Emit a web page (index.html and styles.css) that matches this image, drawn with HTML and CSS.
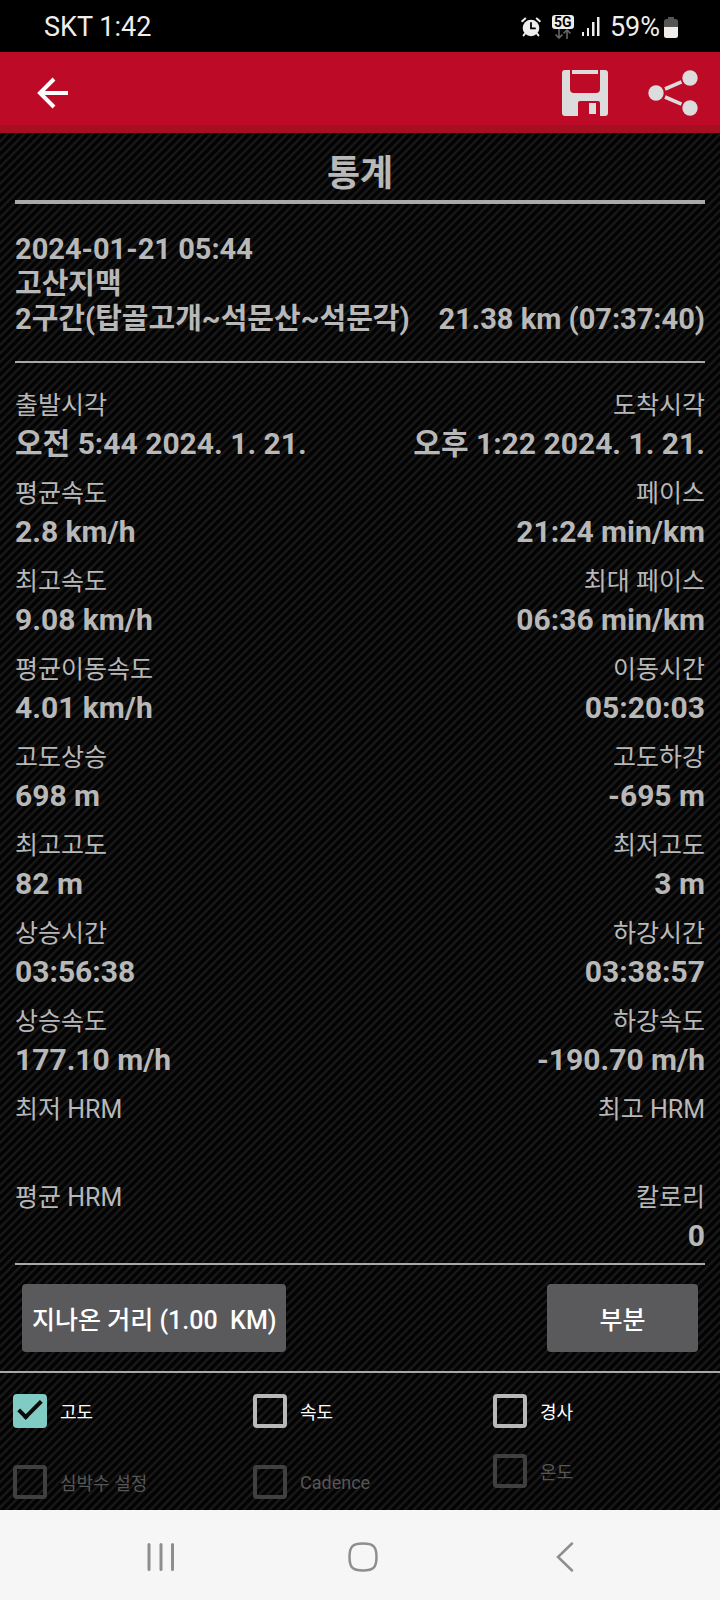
FILE: index.html
```html
<!DOCTYPE html>
<html lang="ko">
<head>
    <meta charset="UTF-8">
    <meta name="viewport" content="width=device-width, initial-scale=1.0">
    <title>통계</title>
    <link rel="stylesheet" href="styles.css">
</head>
<body>
    <div class="status-bar">
        <span>SKT 1:42</span>
        <div class="status-icons">
            <svg width="20" height="20" viewBox="0 0 20 20" fill="none" stroke="#eee" stroke-linecap="round">
                <circle cx="10" cy="11" r="8.3" fill="#eee" stroke="none"></circle>
                <path d="M1.2 4.2 4.2 1.5M18.8 4.2 15.8 1.5" stroke-width="2"></path>
                <path d="M4 16.5 2.6 18.4M16 16.5 17.4 18.4" stroke-width="2"></path>
                <path d="M10 6v5.4h4" stroke="#000" stroke-width="1.8"></path>
            </svg>
            <div class="network">
                <span class="network-type">5G</span>
                <svg width="18" height="10" viewBox="0 0 18 10" fill="none" stroke="#666" stroke-width="1.6">
                    <path d="M5 0v9M1.5 5.5 5 9l3.5-3.5M13 10V1M9.5 4.5 13 1l3.5 3.5"></path>
                </svg>
            </div>
            <svg class="signal" width="18" height="20" viewBox="0 0 18 20" fill="#eee">
                <rect x="0" y="15" width="2" height="4"></rect>
                <rect x="5" y="11" width="2" height="8"></rect>
                <rect x="10" y="5" width="2.5" height="14"></rect>
                <rect x="15" y="0" width="2.5" height="19"></rect>
            </svg>
            <span>59%</span>
            <svg class="battery" width="14" height="21" viewBox="0 0 14 21">
                <path d="M4 0h6v2h1.5A2.5 2.5 0 0 1 14 4.5V10H0V4.5A2.5 2.5 0 0 1 2.5 2H4z" fill="#555"></path>
                <path d="M0 10h14v8.5a2.5 2.5 0 0 1-2.5 2.5h-9A2.5 2.5 0 0 1 0 18.5z" fill="#eee"></path>
            </svg>
        </div>
    </div>

    <header class="toolbar">
        <button class="icon-btn" aria-label="뒤로">
            <svg width="32" height="32" viewBox="0 0 32 32" fill="none" stroke="#fff" stroke-width="4">
                <path d="M31 16H4M17 2 3 16l14 14"></path>
            </svg>
        </button>
        <div class="toolbar-actions">
            <button class="icon-btn" aria-label="저장">
                <svg width="46" height="46" viewBox="0 0 46 46" fill="#dcdcdc">
                    <path fill-rule="evenodd" d="M3 0h5v19a4 4 0 0 0 4 4h22a4 4 0 0 0 4-4V0h5a3 3 0 0 1 3 3v40a3 3 0 0 1-3 3h-5V33a2 2 0 0 0-2-2H18a2 2 0 0 0-2 2v13H3a3 3 0 0 1-3-3V3a3 3 0 0 1 3-3z"></path>
                    <rect x="10" y="0" width="26" height="4"></rect>
                    <rect x="27" y="33" width="7" height="11"></rect>
                </svg>
            </button>
            <button class="icon-btn" aria-label="공유">
                <svg width="50" height="46" viewBox="0 0 50 46" fill="#dcdcdc" stroke="#dcdcdc" stroke-width="3.6">
                    <circle cx="8" cy="23" r="7.7" stroke="none"></circle>
                    <circle cx="42" cy="8" r="7.7" stroke="none"></circle>
                    <circle cx="42" cy="38" r="7.7" stroke="none"></circle>
                    <path d="M17 19 33.5 11.8M17 27 33.5 34.2"></path>
                </svg>
            </button>
        </div>
    </header>

    <main>
        <h1>통계</h1>

        <section class="track">
            <p>2024-01-21 05:44<br>고산지맥<br>2구간(탑골고개~석문산~석문각)</p>
            <p>21.38 km (07:37:40)</p>
        </section>

        <dl class="stats">
            <div><dt>출발시각</dt><dd>오전 5:44 2024. 1. 21.</dd></div>
            <div><dt>도착시각</dt><dd>오후 1:22 2024. 1. 21.</dd></div>
            <div><dt>평균속도</dt><dd>2.8 km/h</dd></div>
            <div><dt>페이스</dt><dd>21:24 min/km</dd></div>
            <div><dt>최고속도</dt><dd>9.08 km/h</dd></div>
            <div><dt>최대 페이스</dt><dd>06:36 min/km</dd></div>
            <div><dt>평균이동속도</dt><dd>4.01 km/h</dd></div>
            <div><dt>이동시간</dt><dd>05:20:03</dd></div>
            <div><dt>고도상승</dt><dd>698 m</dd></div>
            <div><dt>고도하강</dt><dd>-695 m</dd></div>
            <div><dt>최고고도</dt><dd>82 m</dd></div>
            <div><dt>최저고도</dt><dd>3 m</dd></div>
            <div><dt>상승시간</dt><dd>03:56:38</dd></div>
            <div><dt>하강시간</dt><dd>03:38:57</dd></div>
            <div><dt>상승속도</dt><dd>177.10 m/h</dd></div>
            <div><dt>하강속도</dt><dd>-190.70 m/h</dd></div>
            <div><dt>최저 HRM</dt><dd></dd></div>
            <div><dt>최고 HRM</dt><dd></dd></div>
            <div><dt>평균 HRM</dt><dd></dd></div>
            <div><dt>칼로리</dt><dd>0</dd></div>
        </dl>

        <div class="actions">
            <button class="btn">지나온 거리 (1.00&nbsp; KM)</button>
            <button class="btn btn-wide">부분</button>
        </div>

        <div class="options">
            <div class="option-col">
                <label class="option"><input type="checkbox" checked>고도</label>
                <label class="option"><input type="checkbox" disabled>심박수 설정</label>
            </div>
            <div class="option-col">
                <label class="option"><input type="checkbox">속도</label>
                <label class="option"><input type="checkbox" disabled>Cadence</label>
            </div>
            <div class="option-col compact">
                <label class="option"><input type="checkbox">경사</label>
                <label class="option"><input type="checkbox" disabled>온도</label>
            </div>
        </div>
    </main>

    <nav class="nav-bar">
        <button class="icon-btn" aria-label="최근 앱">
            <svg width="28" height="30" viewBox="0 0 28 30" stroke="#8e8e8e" stroke-width="3" stroke-linecap="round">
                <path d="M2 2.5v25M14 2.5v25M25.5 2.5v25"></path>
            </svg>
        </button>
        <button class="icon-btn" aria-label="홈">
            <svg width="30" height="30" viewBox="0 0 30 30" fill="none" stroke="#8e8e8e" stroke-width="2.5">
                <path d="M15 1.5C25.5 1.5 28.5 4.5 28.5 15S25.5 28.5 15 28.5 1.5 25.5 1.5 15 4.5 1.5 15 1.5z"></path>
            </svg>
        </button>
        <button class="icon-btn" aria-label="이전">
            <svg width="28" height="30" viewBox="0 0 28 30" fill="none" stroke="#8e8e8e" stroke-width="2.5" stroke-linecap="round">
                <path d="M21 1.5 7 15l14 13.5"></path>
            </svg>
        </button>
    </nav>
</body>
</html>
```
FILE: styles.css
```css
:root {
    --red: #bd0a26;
    --text: #b8b8b8;
    --rule: #a9a9a9;
}

*,
*::before {
    margin: 0;
    padding: 0;
    box-sizing: border-box;
}

body {
    display: flex;
    flex-direction: column;
    min-height: 100vh;
    background-color: #030303;
    background-image: repeating-linear-gradient(135deg, #030303 0, #030303 2px, #1d1d1d 4px, #030303 6px);
    color: var(--text);
    font-family: Roboto, "Noto Sans CJK KR", sans-serif;
    font-size: 25px;
}

button {
    border: none;
    font: inherit;
    cursor: pointer;
}

svg {
    display: block;
}

.icon-btn {
    background: none;
}

.status-bar {
    display: flex;
    justify-content: space-between;
    align-items: center;
    height: 52px;
    padding: 2px 42px 0 44px;
    background-color: #000;
    color: #eee;
    font-size: 27px;
}

.status-icons {
    display: flex;
    align-items: center;
}

.network {
    margin: 0 8px 0 11px;
}

.network svg {
    margin-left: 2px;
}

.network-type {
    display: block;
    width: 22px;
    border-radius: 3px;
    background-color: #eee;
    color: #000;
    font-size: 14px;
    font-weight: bold;
    line-height: 14px;
    text-align: center;
}

.signal {
    margin-right: 10px;
}

.battery {
    margin-left: 4px;
}

.toolbar {
    display: flex;
    justify-content: space-between;
    align-items: center;
    height: 81px;
    padding: 0 22px 0 37px;
    background-color: var(--red);
    box-shadow: inset 0 -8px #a60f22;
}

.toolbar-actions {
    display: flex;
    gap: 40px;
}

main {
    flex-grow: 1;
}

h1 {
    margin: 0 15px;
    padding: 20px 0 4px;
    border-bottom: 4px solid var(--rule);
    font-size: 36px;
    line-height: 43px;
    text-align: center;
}

.track {
    display: flex;
    justify-content: space-between;
    align-items: flex-end;
    margin: 0 15px;
    padding: 28px 0 24px;
    border-bottom: 2px solid var(--rule);
    font-size: 29px;
    font-weight: bold;
    line-height: 35px;
}

.stats {
    display: grid;
    grid-template-columns: 1fr 1fr;
    row-gap: 18px;
    margin: 0 15px;
    padding: 28px 0 10px;
    border-bottom: 2px solid var(--rule);
}

.stats div:nth-child(even) {
    text-align: right;
}

dt {
    margin-bottom: 5px;
    line-height: 30px;
}

dd {
    min-height: 35px;
    font-size: 30px;
    font-weight: bold;
    line-height: 35px;
    white-space: nowrap;
}

.actions {
    display: flex;
    justify-content: space-between;
    padding: 19px 22px;
    border-bottom: 2px solid var(--rule);
}

.btn {
    height: 68px;
    padding: 0 10px;
    border-radius: 4px;
    background-color: #5a5a5c;
    color: #fff;
    font-weight: 500;
}

.btn-wide {
    width: 151px;
}

.options {
    display: grid;
    grid-template-columns: repeat(3, 1fr);
    padding: 14px 0 3px;
}

.option-col {
    display: flex;
    flex-direction: column;
    gap: 23px;
    padding-left: 13px;
}

.option-col.compact {
    gap: 12px;
}

.option {
    display: flex;
    align-items: center;
    gap: 13px;
    height: 48px;
    color: #fff;
    font-size: 18px;
}

.option:has(:disabled) {
    color: #565656;
}

.option input {
    position: relative;
    width: 34px;
    height: 34px;
    border: 4px solid #b8b8b8;
    border-radius: 4px;
    appearance: none;
}

.option input:disabled {
    border-color: #404040;
}

.option input:checked {
    border-color: #80cbc4;
    background-color: #80cbc4;
}

/* tick */
.option input:checked::before {
    content: '';
    position: absolute;
    top: -3px;
    left: 7px;
    width: 12px;
    height: 24px;
    border: solid #080808;
    border-width: 0 4px 4px 0;
    transform: rotate(45deg);
}

.nav-bar {
    display: flex;
    justify-content: space-between;
    align-items: center;
    height: 90px;
    padding: 4px 141px 0 147px;
    background-color: #f6f6f6;
}
```
